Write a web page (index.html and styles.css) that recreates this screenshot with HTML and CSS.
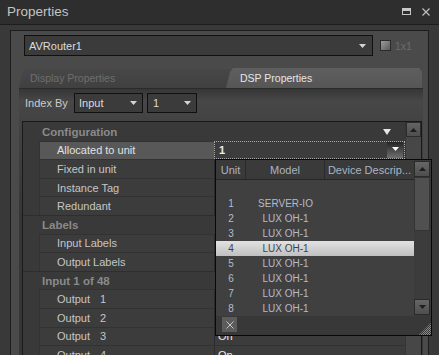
FILE: index.html
```html
<!DOCTYPE html>
<html lang="en">
<head>
    <meta charset="UTF-8">
    <meta name="viewport" content="width=device-width, initial-scale=1.0">
    <title>Properties</title>
    <link rel="stylesheet" href="styles.css">
</head>
<body>
<div class="window">
    <div class="titlebar">
        <span class="title">Properties</span>
        <div class="win-buttons">
            <svg class="btn-max" width="9" height="7" viewBox="0 0 9 7"><path d="M0 0h9v7H0z M1 3v3h7V3z" fill="#c8c8c8" fill-rule="evenodd"/></svg>
            <svg class="btn-close" width="8" height="8" viewBox="0 0 8 8"><path d="M0.5 0.5L7.5 7.5M7.5 0.5L0.5 7.5" stroke="#c0c0c0" stroke-width="1.2"/></svg>
        </div>
    </div>

    <div class="body">
        <div class="panel">
            <div class="device-row">
                <div class="combo combo-device">
                    <span>AVRouter1</span>
                    <svg width="7" height="4" viewBox="0 0 7 4"><path d="M0 0h7L3.5 4z" fill="#d4d4d4"/></svg>
                </div>
                <span class="checkbox"></span>
                <span class="size-label">1x1</span>
            </div>

            <div class="tabs">
                <div class="tab">Display Properties</div>
                <div class="tab active">DSP Properties</div>
            </div>

            <div class="tab-page">
                <div class="index-row">
                    <span class="index-label">Index By</span>
                    <div class="combo combo-index">
                        <span>Input</span>
                        <svg width="7" height="4" viewBox="0 0 7 4"><path d="M0 0h7L3.5 4z" fill="#d4d4d4"/></svg>
                    </div>
                    <div class="combo combo-num">
                        <span>1</span>
                        <svg width="7" height="4" viewBox="0 0 7 4"><path d="M0 0h7L3.5 4z" fill="#d4d4d4"/></svg>
                    </div>
                </div>

                <div class="grid">
                    <div class="grid-rows">
                        <div class="group first">
                            <span>Configuration</span>
                            <svg width="8" height="6" viewBox="0 0 8 6"><path d="M0 0h8L4 6z" fill="#e6e6e6"/></svg>
                        </div>
                        <div class="row selected">
                            <div class="name">Allocated to unit</div>
                            <div class="value">
                                <span>1</span>
                                <span class="drop-btn"><svg width="7" height="4" viewBox="0 0 7 4"><path d="M0 0h7L3.5 4z" fill="#ffffff"/></svg></span>
                            </div>
                        </div>
                        <div class="row"><div class="name">Fixed in unit</div><div class="value"></div></div>
                        <div class="row"><div class="name">Instance Tag</div><div class="value"></div></div>
                        <div class="row"><div class="name">Redundant</div><div class="value"></div></div>
                        <div class="group"><span>Labels</span></div>
                        <div class="row"><div class="name">Input Labels</div><div class="value"></div></div>
                        <div class="row"><div class="name">Output Labels</div><div class="value"></div></div>
                        <div class="group"><span>Input 1 of 48</span></div>
                        <div class="row"><div class="name">Output<span class="num">1</span></div><div class="value"></div></div>
                        <div class="row"><div class="name">Output<span class="num">2</span></div><div class="value"></div></div>
                        <div class="row"><div class="name">Output<span class="num">3</span></div><div class="value">On</div></div>
                        <div class="row"><div class="name">Output<span class="num">4</span></div><div class="value">On</div></div>
                    </div>
                    <div class="vscroll">
                        <div class="sb-btn"><svg width="7" height="4" viewBox="0 0 7 4"><path d="M0 4h7L3.5 0z" fill="#1e1e1e"/></svg></div>
                        <div class="sb-track"></div>
                    </div>
                </div>
            </div>
        </div>
    </div>

    <!-- lista desplegable de unidades -->
    <div class="unit-popup">
        <div class="popup-main">
            <div class="popup-list">
                <div class="popup-head">
                    <div class="col-unit">Unit</div>
                    <div class="col-model">Model</div>
                    <div class="col-desc">Device Descrip...</div>
                </div>
                <div class="popup-rows">
                    <div class="popup-row"><span class="col-unit">1</span><span class="col-model">SERVER-IO</span></div>
                    <div class="popup-row"><span class="col-unit">2</span><span class="col-model">LUX OH-1</span></div>
                    <div class="popup-row"><span class="col-unit">3</span><span class="col-model">LUX OH-1</span></div>
                    <div class="popup-row current"><span class="col-unit">4</span><span class="col-model">LUX OH-1</span></div>
                    <div class="popup-row"><span class="col-unit">5</span><span class="col-model">LUX OH-1</span></div>
                    <div class="popup-row"><span class="col-unit">6</span><span class="col-model">LUX OH-1</span></div>
                    <div class="popup-row"><span class="col-unit">7</span><span class="col-model">LUX OH-1</span></div>
                    <div class="popup-row"><span class="col-unit">8</span><span class="col-model">LUX OH-1</span></div>
                </div>
            </div>
            <div class="popup-scroll">
                <div class="psb-btn"><svg width="7" height="4" viewBox="0 0 7 4"><path d="M0 4h7L3.5 0z" fill="#1e1e1e"/></svg></div>
                <div class="psb-thumb"></div>
                <div class="psb-track"></div>
                <div class="psb-btn"><svg width="7" height="4" viewBox="0 0 7 4"><path d="M0 0h7L3.5 4z" fill="#1e1e1e"/></svg></div>
            </div>
        </div>
        <div class="popup-foot">
            <span class="clear-btn"><svg width="8" height="8" viewBox="0 0 8 8"><path d="M0.5 0.5L7.5 7.5M7.5 0.5L0.5 7.5" stroke="#c4c4c4" stroke-width="1"/></svg></span>
            <span class="grip"></span>
        </div>
    </div>
</div>
</body>
</html>
```

FILE: styles.css
```css
* {
    box-sizing: border-box;
}

body {
    margin: 0;
    background: #383838;
    font-family: 'Liberation Sans', Arial, sans-serif;
    font-size: 11px;
    color: #c8c8c8;
}

.window {
    position: relative;
    width: 439px;
    height: 355px;
    overflow: hidden;
    background: #393939;
}

.titlebar {
    display: flex;
    align-items: center;
    justify-content: space-between;
    height: 25px;
    padding: 0 9px 1px 7px;
    background: #2e2e2e;
    border-bottom: 1px solid #1d1d1d;
}

.title {
    font-size: 13.5px;
    color: #c4c4c4;
}

.win-buttons {
    display: flex;
    align-items: center;
    gap: 11px;
}

.body {
    padding: 5px 10px 0;
}

.panel {
    height: 340px;
    border: 1px solid #1c1c1c;
    background: #4a4a4a;
}

/* fila del dispositivo */
.device-row {
    display: flex;
    align-items: center;
    margin: 4px 0 0 13px;
}

.combo {
    display: flex;
    align-items: center;
    justify-content: space-between;
    border: 1px solid #101010;
    background: #3b3b3b;
    color: #dcdcdc;
}

.combo-device {
    width: 349px;
    height: 21px;
    padding: 0 6px 0 4px;
}

.checkbox {
    width: 11px;
    height: 11px;
    margin-left: 7px;
    border: 1px solid #2a2a2a;
    background: linear-gradient(135deg, #9c9c9c, #5a5a5a);
}

.size-label {
    margin-left: 4px;
    font-size: 10.5px;
    color: #6b6b6b;
}

/* pestañas */
.tabs {
    display: flex;
    align-items: flex-end;
    height: 20px;
    margin: 12px 0 0 8px;
}

.tab {
    width: 213px;
    height: 19px;
    padding-left: 11px;
    line-height: 19px;
    font-size: 10.5px;
    color: #6e6e6e;
    background: linear-gradient(#474747, #404040);
    clip-path: polygon(0 100%, 3px 4px, 6px 0, 100% 0, 100% 100%);
}

.tab.active {
    width: 196px;
    height: 20px;
    margin-left: -6px;
    padding-left: 14px;
    line-height: 20px;
    color: #e6e6e6;
    background: linear-gradient(#5f5f5f, #565656);
    clip-path: polygon(0 100%, 4px 4px, 7px 0, calc(100% - 3px) 0, 100% 4px, 100% 100%);
}

.tab-page {
    width: 404px;
    height: 280px;
    margin-left: 8px;
    padding: 4px 1px 0 3px;
    border-top: 1px solid #2a2a2a;
    background: linear-gradient(#363636, #474747 12px, #434343 30px, #363636 120px);
}

.index-row {
    display: flex;
    align-items: center;
    height: 20px;
}

.index-label {
    width: 52px;
    padding-left: 3px;
    color: #cacaca;
}

.combo-index {
    width: 69px;
    height: 20px;
    padding: 0 5px 0 4px;
}

.combo-num {
    width: 50px;
    height: 20px;
    margin-left: 4px;
    padding: 0 5px 0 5px;
}

/* rejilla de propiedades */
.grid {
    display: flex;
    height: 250px;
    margin-top: 8px;
    border: 1px solid #1a1a1a;
    background: #393939;
}

.grid-rows {
    flex: 1;
}

.group {
    display: flex;
    align-items: center;
    justify-content: space-between;
    height: 18.6px;
    padding: 0 14px 0 19px;
    border-top: 1px solid #2e2e2e;
    font-size: 11.5px;
    font-weight: bold;
    color: #8a8a8a;
}

.group.first {
    border-top-color: transparent;
}

.row {
    display: flex;
    height: 18.6px;
    padding-left: 16px;
}

.row .name {
    display: flex;
    align-items: center;
    width: 176px;
    padding-left: 17px;
    border-top: 1px solid #323232;
    border-left: 1px solid #333333;
    border-right: 1px solid #2c2c2c;
    background: #3c3c3c;
    color: #c6c6c6;
}

.row .num {
    margin-left: 10px;
}

.row .value {
    flex: 1;
    display: flex;
    align-items: center;
    justify-content: space-between;
    padding-left: 3px;
    border-top: 1px solid #323232;
    background: #3c3c3c;
    color: #ececec;
}

.row.selected .name {
    background: #585858;
    color: #e2e2e2;
}

.row.selected .value {
    margin-left: -1px;
    padding: 0 1px 0 4px;
    border: 1px dotted #a8a8a8;
    font-weight: bold;
}

.drop-btn {
    display: flex;
    align-items: flex-start;
    justify-content: center;
    width: 16px;
    height: 16px;
    padding-top: 5px;
    background: linear-gradient(#242424, #707070);
}

.vscroll {
    display: flex;
    flex-direction: column;
    width: 16px;
    padding-left: 1px;
    background: #353535;
}

.sb-btn {
    display: flex;
    align-items: center;
    justify-content: center;
    height: 15px;
    border: 1px solid #2c2c2c;
    background: linear-gradient(#646464, #4e4e4e);
}

.sb-track {
    flex: 1;
    background: #474747;
}

/* lista desplegable */
.unit-popup {
    position: absolute;
    left: 215px;
    top: 159px;
    width: 217px;
    height: 177px;
    border: 1px solid #080808;
    background: #3a3a3a;
    color: #b4bccb;
}

.popup-main {
    display: flex;
    height: 156px;
}

.popup-list {
    width: 198px;
    background: #404040;
}

.popup-head {
    display: flex;
    height: 20px;
    border-bottom: 1px solid #262626;
    background: #3a3a3a;
    color: #aab3c2;
}

.popup-head > div {
    display: flex;
    align-items: center;
    justify-content: center;
    border-right: 1px solid #2a2a2a;
}

.col-unit {
    width: 30px;
    text-align: center;
}

.col-model {
    width: 79px;
    text-align: center;
}

.popup-head .col-desc {
    flex: 1;
    border-right: none;
}

.popup-rows {
    padding-top: 16px;
    font-size: 10px;
}

.popup-row {
    display: flex;
    align-items: center;
    height: 15px;
}

.popup-row.current {
    background: linear-gradient(#e2e2e2, #c0c0c0);
    color: #3c4250;
}

.popup-scroll {
    display: flex;
    flex-direction: column;
    width: 17px;
    padding: 1px 1px 1px 0;
    background: #3a3a3a;
}

.psb-btn {
    display: flex;
    align-items: center;
    justify-content: center;
    height: 16px;
    border: 1px solid #2a2a2a;
    background: linear-gradient(#666666, #4e4e4e);
}

.psb-thumb {
    height: 54px;
    border: 1px solid #343434;
    background: #505050;
}

.psb-track {
    flex: 1;
    background: #3c3c3c;
}

.popup-foot {
    display: flex;
    justify-content: space-between;
    height: 19px;
    padding: 1px 0 0 6px;
    background: #383838;
}

.clear-btn {
    display: flex;
    align-items: center;
    justify-content: center;
    width: 15px;
    height: 15px;
    background: #5c5c5c;
}

.grip {
    align-self: flex-end;
    width: 12px;
    height: 12px;
    background: repeating-conic-gradient(#8c8c8c 0 25%, transparent 0 50%) 0 0 / 2px 2px;
    clip-path: polygon(100% 0, 100% 100%, 0 100%);
}
```
